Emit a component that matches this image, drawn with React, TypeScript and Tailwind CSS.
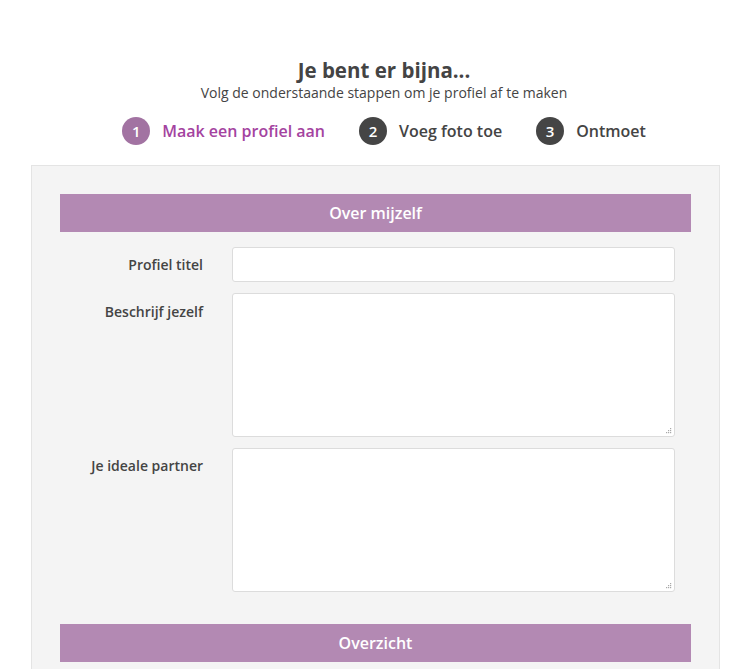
const steps = [
  { n: 1, label: "Maak een profiel aan", active: true },
  { n: 2, label: "Voeg foto toe", active: false },
  { n: 3, label: "Ontmoet", active: false },
];

const font = { fontFamily: '"Open Sans", "Liberation Sans", sans-serif' };

function Grip() {
  // little dotted resize corner, like the reference's textarea
  const dots = [
    [6, 1],
    [4, 3], [6, 3],
    [2, 5], [4, 5], [6, 5],
  ];
  return (
    <svg className="absolute right-[3px] bottom-[3px]" width="8" height="7" viewBox="0 0 8 7">
      {dots.map(([x, y], i) => (
        <rect key={i} x={x} y={y} width="1.2" height="1.2" fill="#a8a8a8" />
      ))}
    </svg>
  );
}

function Area() {
  return (
    <div className="relative w-[443px] h-[144px]">
      <textarea className="w-full h-full resize-none rounded-[3px] border border-[#dcdcdc] bg-white px-2 outline-none" />
      <Grip />
    </div>
  );
}

export default function App() {
  return (
    <div className="w-[752px] h-[669px] overflow-hidden bg-white text-[#444444]" style={font}>
      <div className="pt-[56px] pl-[16px] text-center">
        <h1 className="text-[20.5px] leading-[28px] font-bold text-[#444444]">Je bent er bijna...</h1>
        <p className="text-[14px] leading-[18px] text-[#444444]">Volg de onderstaande stappen om je profiel af te maken</p>
      </div>

      <div className="mt-[15px] flex items-center justify-center gap-[34px] pl-[16px]">
        {steps.map((s) => (
          <div key={s.n} className="flex items-center gap-[12px]">
            <span
              className={`w-[28px] h-[28px] rounded-full flex items-center justify-center text-white text-[15px] font-semibold ${
                s.active ? "bg-[#a273a2]" : "bg-[#454545]"
              }`}
            >
              {s.n}
            </span>
            <span className={`text-[16px] font-semibold ${s.active ? "text-[#a443a0]" : "text-[#444444]"}`}>
              {s.label}
            </span>
          </div>
        ))}
      </div>

      <div className="ml-[31px] mt-[20px] w-[689px] border border-[#e4e4e4] bg-[#f4f4f4] px-[28px] pt-[28px] pb-[40px]">
        <div className="h-[38px] bg-[#b389b3] flex items-center justify-center text-white text-[16px] font-semibold">
          Over mijzelf
        </div>

        <div className="mt-[15px] flex flex-col gap-[11px]">
          <div className="flex items-center">
            <label className="w-[172px] pr-[29px] text-right text-[14px] font-semibold text-[#444444]">Profiel titel</label>
            <input className="w-[443px] h-[35px] rounded-[3px] border border-[#dcdcdc] bg-white px-2 outline-none" />
          </div>
          <div className="flex items-start">
            <label className="w-[172px] pr-[29px] pt-[8px] text-right text-[14px] font-semibold text-[#444444]">Beschrijf jezelf</label>
            <Area />
          </div>
          <div className="flex items-start">
            <label className="w-[172px] pr-[29px] pt-[7px] text-right text-[14px] font-semibold text-[#444444]">Je ideale partner</label>
            <Area />
          </div>
        </div>

        <div className="mt-[32px] h-[38px] bg-[#b389b3] flex items-center justify-center text-white text-[16px] font-semibold">
          Overzicht
        </div>
      </div>
    </div>
  );
}
